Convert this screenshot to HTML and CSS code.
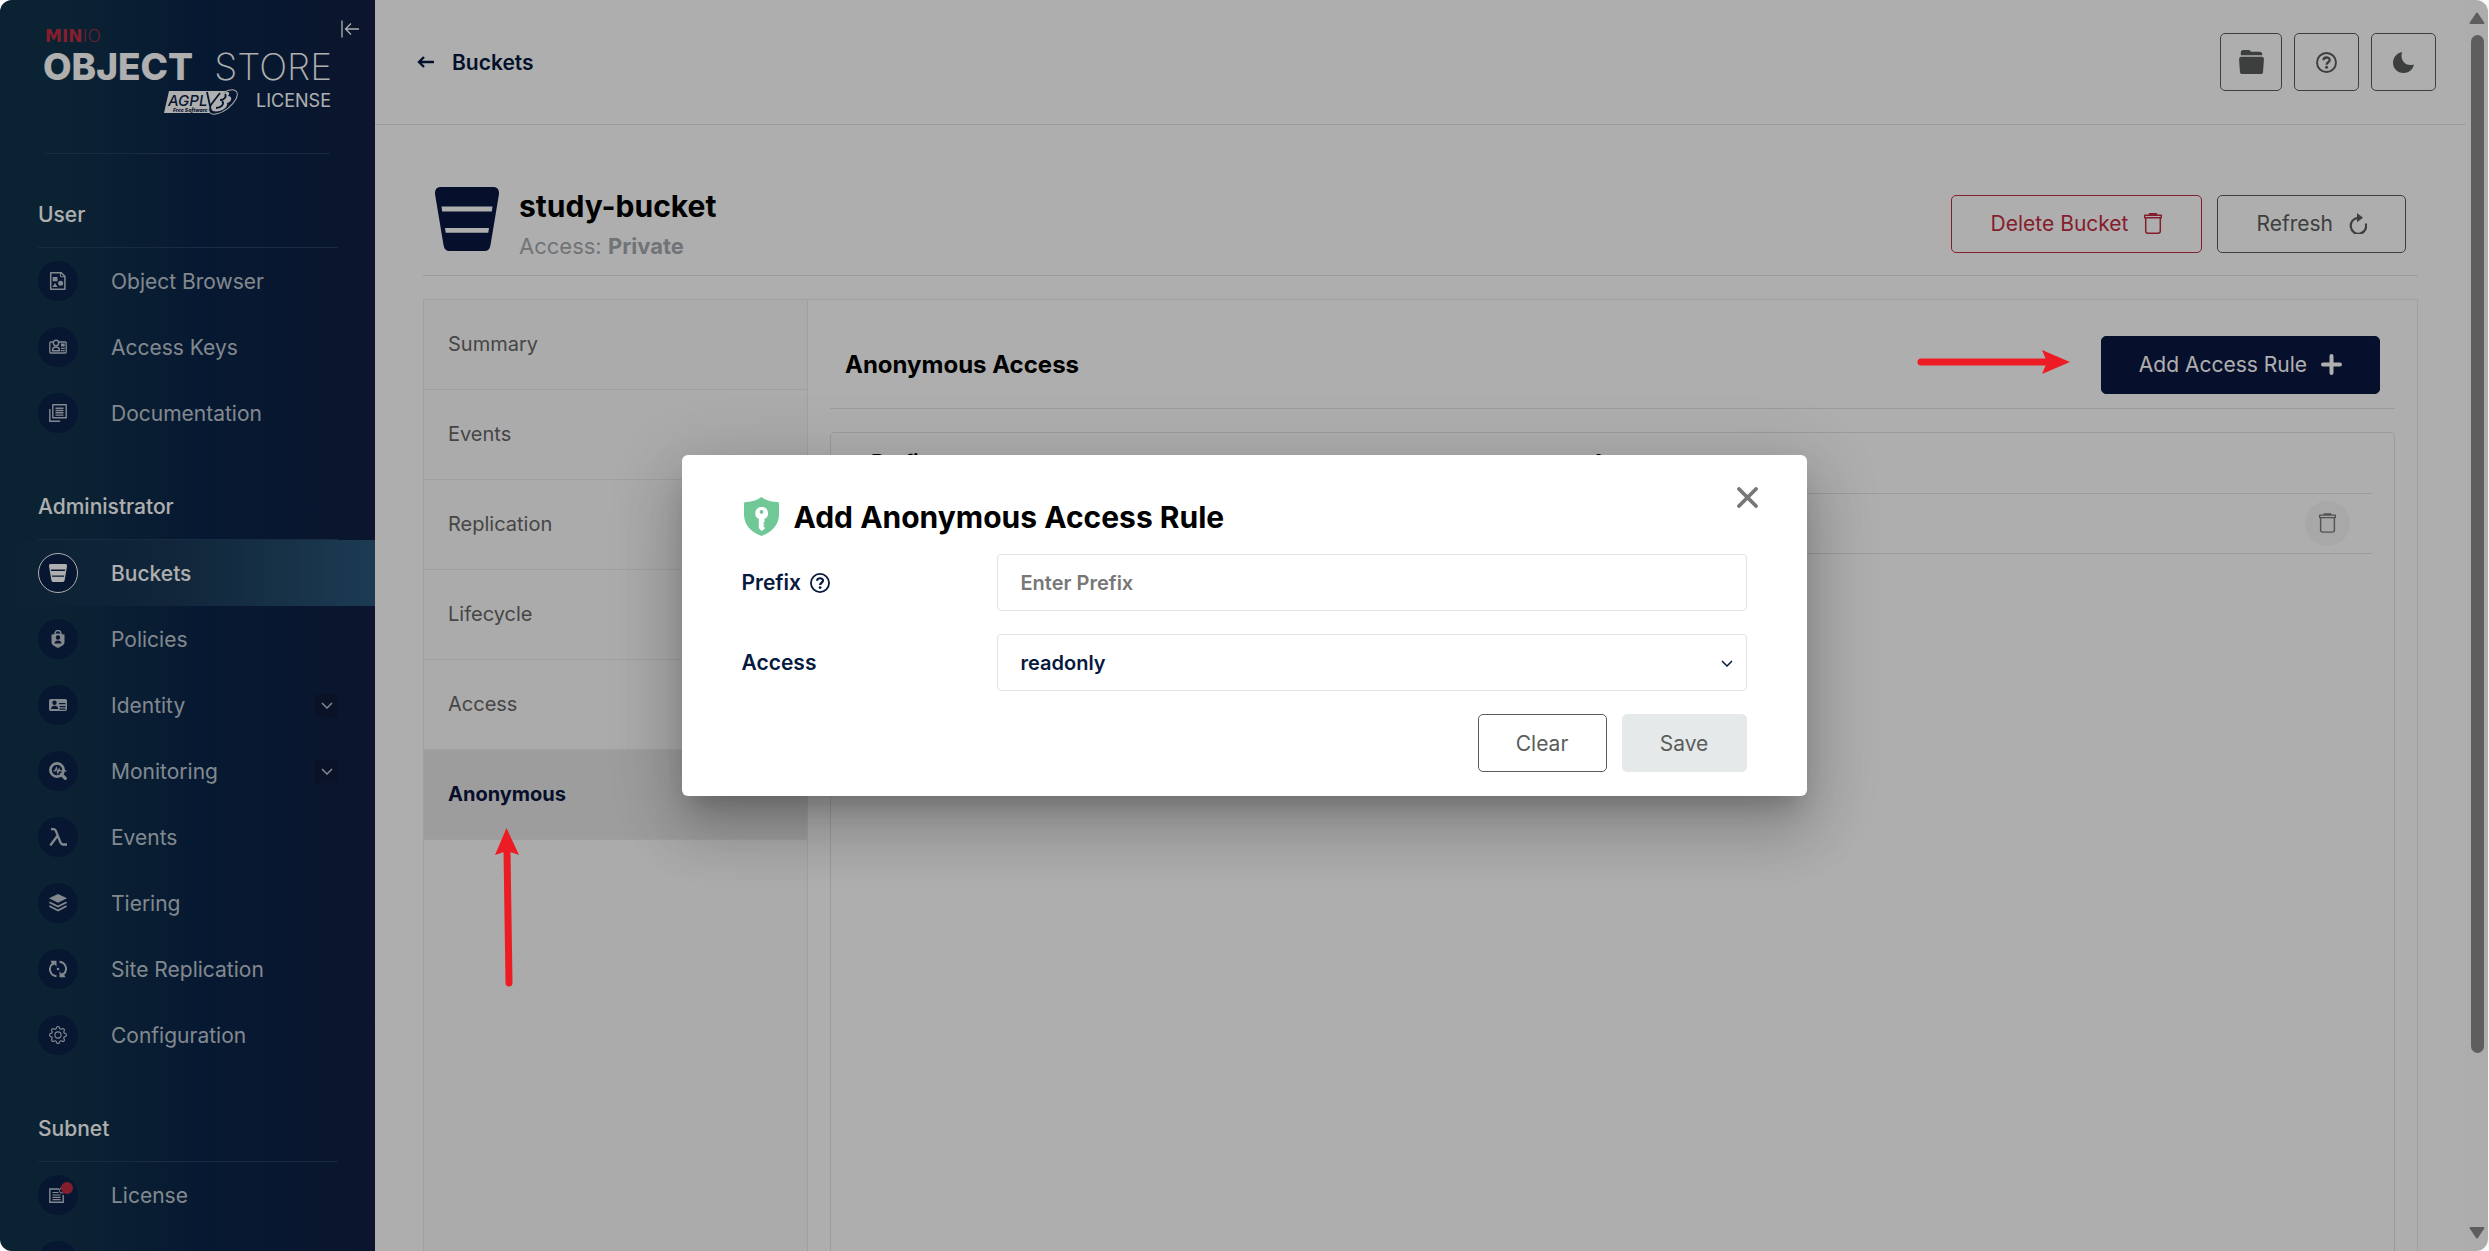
FILE: index.html
```html
<!DOCTYPE html>
<html lang="en">
<head>
<meta charset="utf-8">
<title>MinIO Console</title>
<link rel="stylesheet" href="styles.css">
</head>
<body>
<svg class="sprite" aria-hidden="true">
  <symbol id="i-browser" viewBox="0 0 18 18"><path d="M1.700.8h10.600l3.600 3.600v12.800H1.700z" fill="none" stroke="currentColor" stroke-width="1.500" stroke-linejoin="round"/><path d="M11.500 1v3.700h3.800" fill="none" stroke="currentColor"/><path d="M3.700 5h4.800v4.200H3.700zM6 11l2.600 4H3.400z" fill="currentColor"/><circle cx="11.600" cy="11.300" r="2.500" fill="currentColor"/></symbol>
  <symbol id="i-keys" viewBox="0 0 18 18"><path d="M4 4H1.700q-.9 0-.9.900v9.200q0 .9.900.9h14.600q.9 0 .9-.9V4.900q0-.9-.9-.9H10" fill="none" stroke="currentColor" stroke-width="1.300"/><circle cx="7" cy="5" r="2.700" fill="none" stroke="currentColor" stroke-width="1.400"/><path d="M3.500 12.800c0-5 7-5 7 0z" fill="none" stroke="currentColor" stroke-width="1.400"/><path d="M12 5.500h3.700v3H12zM12 9.700h3.700v1.200H12zM12 12h3.700v1.200H12z" fill="currentColor"/></symbol>
  <symbol id="i-docs" viewBox="0 0 18 18"><path d="M3.800.8h13.400v13H3.800z" fill="none" stroke="currentColor" stroke-width="1.400" stroke-linejoin="round"/><path d="M.8 5v12.200h10.400M6.500 4.200h8M6.500 6.500h8M6.500 8.800h8M6.500 11.100h8" fill="none" stroke="currentColor" stroke-width="1.400"/></symbol>
  <symbol id="i-bucket" viewBox="0 0 64 64"><path fill="currentColor" fill-rule="evenodd" d="M6 0h52q6.500 0 6 7l-8.500 51q-.8 6-6 6h-35q-5.200 0-6-6L0 7Q-.5 0 6 0zM6.500 19.500l.7 5h49.600l.7-5zM10 41l.7 4.700h42.600L54 41z"/></symbol>
  <symbol id="i-policy" viewBox="0 0 18 18"><path d="M6 5V3.500a3 3 0 0 1 6 0V5" fill="none" stroke="currentColor" stroke-width="1.400"/><path fill="currentColor" fill-rule="evenodd" d="M2.500 4.500q3.500 0 4.500-1h4q1 1 4.500 1v7.700c0 3-4 4.300-6.500 5.800-2.500-1.500-6.500-2.800-6.500-5.800zM9 5.300a2.200 2.200 0 1 0 0 4.400 2.200 2.200 0 0 0 0-4.400zM5.500 13.500h7c0-4-7-4-7 0z"/></symbol>
  <symbol id="i-identity" viewBox="0 0 18 18"><path fill="currentColor" fill-rule="evenodd" d="M1.700 3h14.600q1.700 0 1.700 1.700v8.600q0 1.700-1.700 1.700H1.700Q0 15 0 13.300V4.700Q0 3 1.700 3zM5.500 4.500a2.200 2.200 0 1 0 0 4.400 2.200 2.200 0 0 0 0-4.400zM2 13h7.300c0-4.500-7.300-4.500-7.300 0zM10 7v1.200h6.500V7zM10.500 10v1.200h6V10zM10.500 12.500v1.200h6v-1.200z"/></symbol>
  <symbol id="i-monitor" viewBox="0 0 18 18"><circle cx="8" cy="8" r="6.600" fill="none" stroke="currentColor" stroke-width="2.700"/><path d="m12.500 12.500 3.800 3.800" stroke="currentColor" stroke-width="3.200" stroke-linecap="round"/><path d="M4.500 8.800h1.700l1.200-3 1.400 5.200 1.300-4 .8 1.800h6.600" fill="none" stroke="currentColor" stroke-width="1.200"/></symbol>
  <symbol id="i-lambda" viewBox="0 0 18 18"><path d="M2 1.200h2.300q2 0 2.800 2.200l4.200 10.700q1 2.400 3 2.400H18M8.700 7.500 1.300 17.500" fill="none" stroke="currentColor" stroke-width="2.300"/></symbol>
  <symbol id="i-tier" viewBox="0 0 18 18"><path d="m9 0 9 4.300-9 4.500L0 4.300z" fill="currentColor"/><path d="m.4 8.200 8.600 4.300 8.600-4.300M.4 12l8.600 4.600L17.600 12" fill="none" stroke="currentColor" stroke-width="1.800"/></symbol>
  <symbol id="i-site" viewBox="0 0 18 18"><path d="M7.500 16.300C1 15.500-1.200 8 3.500 3.800M10.500 1.700C17 2.500 19.200 10 14.500 14.200" fill="none" stroke="currentColor" stroke-width="1.900"/><path d="M1.500.700h6v6L5.500 4.200 4 5.400zM16.500 17.300h-6v-6l2 2.500 1.500-1.200z" fill="currentColor"/><circle cx="9" cy="9" r="1.300" fill="currentColor"/></symbol>
  <symbol id="i-gear" viewBox="0 0 16 16"><path fill="currentColor" d="M8 4.754a3.246 3.246 0 1 0 0 6.492 3.246 3.246 0 0 0 0-6.492M5.754 8a2.246 2.246 0 1 1 4.492 0 2.246 2.246 0 0 1-4.492 0"/><path fill="currentColor" d="M9.796 1.343c-.527-1.790-3.065-1.790-3.592 0l-.094.319a.873.873 0 0 1-1.255.520l-.292-.160c-1.640-.892-3.433.902-2.540 2.541l.159.292a.873.873 0 0 1-.520 1.255l-.319.094c-1.790.527-1.790 3.065 0 3.592l.319.094a.873.873 0 0 1 .520 1.255l-.160.292c-.892 1.640.901 3.434 2.541 2.540l.292-.159a.873.873 0 0 1 1.255.520l.094.319c.527 1.790 3.065 1.790 3.592 0l.094-.319a.873.873 0 0 1 1.255-.520l.292.160c1.640.893 3.434-.902 2.540-2.541l-.159-.292a.873.873 0 0 1 .520-1.255l.319-.094c1.790-.527 1.790-3.065 0-3.592l-.319-.094a.873.873 0 0 1-.520-1.255l.160-.292c.893-1.640-.902-3.433-2.541-2.540l-.292.159a.873.873 0 0 1-1.255-.520zm-2.633.283c.246-.835 1.428-.835 1.674 0l.094.319a1.873 1.873 0 0 0 2.693 1.115l.291-.160c.764-.415 1.600.420 1.184 1.185l-.159.292a1.873 1.873 0 0 0 1.116 2.692l.318.094c.835.246.835 1.428 0 1.674l-.319.094a1.873 1.873 0 0 0-1.115 2.693l.160.291c.415.764-.420 1.600-1.185 1.184l-.291-.159a1.873 1.873 0 0 0-2.693 1.116l-.094.318c-.246.835-1.428.835-1.674 0l-.094-.319a1.873 1.873 0 0 0-2.692-1.115l-.292.160c-.764.415-1.600-.420-1.184-1.185l.159-.291A1.873 1.873 0 0 0 1.945 8.930l-.319-.094c-.835-.246-.835-1.428 0-1.674l.319-.094A1.873 1.873 0 0 0 3.060 4.377l-.160-.292c-.415-.764.420-1.600 1.185-1.184l.292.159a1.873 1.873 0 0 0 2.692-1.115z"/></symbol>
  <symbol id="i-license" viewBox="0 0 18 18"><path d="M10 3H.8v13.200h13.400V9" fill="none" stroke="currentColor" stroke-width="1.400"/><path d="M3.500 6.500h6M3.500 9h8M3.500 11.300h8M3.500 13.600h8" stroke="currentColor" stroke-width="1.200"/><circle cx="13" cy="4.500" r="2.600" fill="none" stroke="currentColor"/></symbol>
  <symbol id="i-chevron" viewBox="0 0 12 7"><path d="m1 1 5 5 5-5" fill="none" stroke="currentColor" stroke-width="1.500"/></symbol>
  <symbol id="i-trash" viewBox="0 0 18 21"><path d="M1.700 4.500v13.500q0 2.200 2.200 2.200h10.200q2.200 0 2.200-2.200V4.500" fill="none" stroke="currentColor" stroke-width="1.500"/><path d="M.700 2.200h16.600v2.600H.700zM5.500 2V.8h7V2" fill="none" stroke="currentColor" stroke-width="1.400" stroke-linejoin="round"/></symbol>
  <symbol id="i-help" viewBox="0 0 21 21"><circle cx="10.500" cy="10.500" r="9.500" fill="none" stroke="currentColor" stroke-width="1.900"/><path d="M7.500 8.200c0-3.600 6.200-3.500 6.200-.2 0 2.300-3.100 2.200-3.100 4.700" fill="none" stroke="currentColor" stroke-width="2.300"/><circle cx="10.600" cy="15.300" r="1.500" fill="currentColor"/></symbol>
  <symbol id="i-cross" viewBox="0 0 21 21"><path d="m2 2 17 17M19 2 2 19" stroke="currentColor" stroke-width="3.800" stroke-linecap="round"/></symbol>
</svg>

<div class="app">
  <nav class="sidebar">
    <button class="collapse" aria-label="Collapse menu"><svg viewBox="0 0 18 18"><path d="M1 .5v17M18 9H4.500M10 3.500 4.500 9l5.500 5.500" fill="none" stroke="currentColor" stroke-width="1.300"/></svg></button>
    <div class="brand">
      <svg viewBox="0 0 285 86" role="img" aria-label="MinIO Object Store, AGPL v3 license">
        <text class="lg-minio" x="0" y="12"><tspan class="lg-heavy">MIN</tspan><tspan class="lg-thin">IO</tspan></text>
        <text class="lg-bold" x="-2" y="50">OBJECT</text>
        <text class="lg-light" x="287" y="50" text-anchor="end">STORE</text>
        <path d="M124 61h62l-16 22h-51z" fill="#fff"/>
        <text class="lg-agpl" x="123" y="76">AGPL</text>
        <text class="lg-free" x="128" y="82">Free Software</text>
        <ellipse cx="178" cy="72" rx="17" ry="8" transform="rotate(-38 178 72)" fill="#0a2448" stroke="#fff"/>
        <path d="M168 81c-5-4 1-14 10-18 5-2 8-1 5 3 5 0 4 6-1 7 2 5-8 10-14 8z" fill="#fff"/>
        <path d="m162 62 3 14 10-13M171 78c5 0 9-4 6-7M175 70c4 0 7-3 5-6" fill="none" stroke="#0a2448" stroke-width="1.800"/>
        <text class="lg-license" x="286" y="77" text-anchor="end">LICENSE</text>
      </svg>
    </div>
    <h2 class="group first">User</h2>
    <a class="item" href="#"><span class="dot"><svg><use href="#i-browser"/></svg></span>Object Browser</a>
    <a class="item" href="#"><span class="dot"><svg><use href="#i-keys"/></svg></span>Access Keys</a>
    <a class="item" href="#"><span class="dot"><svg><use href="#i-docs"/></svg></span>Documentation</a>
    <h2 class="group">Administrator</h2>
    <a class="item active" href="#"><span class="dot"><svg><use href="#i-bucket"/></svg></span>Buckets</a>
    <a class="item" href="#"><span class="dot"><svg><use href="#i-policy"/></svg></span>Policies</a>
    <a class="item" href="#"><span class="dot"><svg><use href="#i-identity"/></svg></span>Identity<span class="more"><svg><use href="#i-chevron"/></svg></span></a>
    <a class="item" href="#"><span class="dot"><svg><use href="#i-monitor"/></svg></span>Monitoring<span class="more"><svg><use href="#i-chevron"/></svg></span></a>
    <a class="item" href="#"><span class="dot"><svg><use href="#i-lambda"/></svg></span>Events</a>
    <a class="item" href="#"><span class="dot"><svg><use href="#i-tier"/></svg></span>Tiering</a>
    <a class="item" href="#"><span class="dot"><svg><use href="#i-site"/></svg></span>Site Replication</a>
    <a class="item" href="#"><span class="dot"><svg><use href="#i-gear"/></svg></span>Configuration</a>
    <h2 class="group">Subnet</h2>
    <a class="item" href="#"><span class="dot"><svg><use href="#i-license"/></svg><span class="badge"></span></span>License</a>
    <a class="item" href="#" aria-label="Health"><span class="dot"></span></a>
  </nav>

  <main class="main">
    <header class="topbar">
      <a class="back" href="#"><svg viewBox="0 0 17 12"><path d="M17 6H2M7 1 2 6l5 5" fill="none" stroke="currentColor" stroke-width="2.400"/></svg>Buckets</a>
      <div class="tools">
        <button class="btn tool folder" aria-label="Object transfers"><svg viewBox="0 0 29 28"><path fill="currentColor" d="M2 6V3q0-3 3-3h6q2 0 3 2h10q3 0 3 3v1zM2 8h25q2 0 2 3l-1 14q0 3-3 3H4q-3 0-3-3L0 11q0-3 2-3z"/></svg></button>
        <button class="btn tool" aria-label="Help"><svg><use href="#i-help"/></svg></button>
        <button class="btn tool" aria-label="Dark mode"><svg viewBox="0 0 21 21"><path fill="currentColor" d="M9 0C4 1 0 5.500 0 11c0 5.500 4.500 10 10.500 10 5 0 9.500-3.500 10.500-8.500C14 15 6.500 9.500 9 0z"/></svg></button>
      </div>
    </header>

    <section class="content">
      <div class="bucket-head">
        <svg class="bucket-icon"><use href="#i-bucket"/></svg>
        <div class="bucket-name">
          <h1>study-bucket</h1>
          <p>Access: <b>Private</b></p>
        </div>
        <button class="btn danger">Delete Bucket<svg><use href="#i-trash"/></svg></button>
        <button class="btn">Refresh<svg viewBox="0 0 18 21"><path d="M16.800 10.500A7.700 8 0 1 1 9 4.800" fill="none" stroke="currentColor" stroke-width="2.200"/><path d="M8 0l6 4.700L8 9.300z" fill="currentColor"/></svg></button>
      </div>

      <div class="panel">
        <div class="tabs">
          <button class="tab">Summary</button>
          <button class="tab">Events</button>
          <button class="tab">Replication</button>
          <button class="tab">Lifecycle</button>
          <button class="tab">Access</button>
          <button class="tab selected">Anonymous</button>
        </div>
        <div class="pane">
          <div class="pane-head">
            <h2>Anonymous Access</h2>
            <button class="btn primary">Add Access Rule<svg viewBox="0 0 21 21"><path d="M10.500 2v17M2 10.500h17" stroke="currentColor" stroke-width="4" stroke-linecap="round"/></svg></button>
          </div>
          <div class="table-box">
            <table>
              <thead><tr><th class="c-prefix">Prefix</th><th>Access</th><th class="c-act"></th></tr></thead>
              <tbody><tr><td></td><td></td><td class="c-act"><button class="round" aria-label="Delete rule"><svg><use href="#i-trash"/></svg></button></td></tr></tbody>
            </table>
          </div>
        </div>
      </div>
    </section>
  </main>

  <div class="scrollbar" aria-hidden="true">
    <svg viewBox="0 0 16 12"><path d="M8 1.500 14.500 11h-13z" fill="currentColor" stroke="currentColor" stroke-width="2" stroke-linejoin="round"/></svg>
    <div class="thumb"></div>
    <svg viewBox="0 0 16 12"><path d="M8 10.500 14.500 1h-13z" fill="currentColor" stroke="currentColor" stroke-width="2" stroke-linejoin="round"/></svg>
  </div>

  <div class="overlay">
    <form class="dialog" role="dialog" aria-labelledby="dlg-title">
      <button type="button" class="close" aria-label="Close"><svg><use href="#i-cross"/></svg></button>
      <h2 id="dlg-title"><svg viewBox="0 0 35 39"><path fill="#70c896" d="M17.500 0C13 3.500 7 5 1.500 5Q0 5 0 6.500V17c0 11 7 18 17.500 22C28 35 35 28 35 17V6.500Q35 5 33.500 5C28 5 22 3.500 17.500 0z"/><path fill="#fff" fill-rule="evenodd" d="M17.500 10a6.200 6.200 0 0 0-2.700 11.800V31l2.700 3 3-2v-2l-1.500-1.200 1.500-1.300-1.500-1.300 1.500-1.300v-3.100A6.200 6.200 0 0 0 17.500 10zm0 3a1.900 1.900 0 1 1 0 3.800 1.900 1.900 0 0 1 0-3.800z"/></svg>Add Anonymous Access Rule</h2>
      <div class="field">
        <label for="prefix">Prefix<svg><use href="#i-help"/></svg></label>
        <input id="prefix" type="text" placeholder="Enter Prefix">
      </div>
      <div class="field">
        <label for="access">Access</label>
        <div class="select">
          <select id="access"><option>readonly</option><option>writeonly</option><option>readwrite</option></select>
          <svg><use href="#i-chevron"/></svg>
        </div>
      </div>
      <div class="actions">
        <button type="reset" class="btn clear">Clear</button>
        <button type="submit" class="btn save" disabled>Save</button>
      </div>
    </form>
  </div>

  <svg class="arrow arrow-right" viewBox="0 0 153 24" aria-hidden="true"><path d="M4 12h126" stroke="#ed1c24" stroke-width="7" stroke-linecap="round"/><path d="m153 12-28-12 5 12-5 12z" fill="#ed1c24"/></svg>
  <svg class="arrow arrow-up" viewBox="0 0 24 159" aria-hidden="true"><path d="M14 155 12 23" stroke="#ed1c24" stroke-width="7" stroke-linecap="round"/><path d="M11.500 0 0 27l12-4 12 4z" fill="#ed1c24"/></svg>
</div>
</body>
</html>
```

FILE: styles.css
```css
* { box-sizing: border-box; }

body {
  margin: 0;
  background: #fbfbfb;
  font-family: Inter, "Liberation Sans", sans-serif;
  font-size: 21px;
}

h1, h2, p { margin: 0; }
button, input, select { font: inherit; color: inherit; margin: 0; }
button { background: none; border: 0; padding: 0; cursor: pointer; }
a { color: inherit; text-decoration: none; }
svg { display: block; flex: none; }
.sprite { position: absolute; width: 0; height: 0; }

.app {
  position: relative;
  display: flex;
  height: 100vh;
  margin-right: 1px;
  overflow: hidden;
  border-radius: 12px;
  background: #fefefe;
}

/* Sidebar */
.sidebar {
  position: relative;
  flex: none;
  width: 375px;
  overflow: hidden;
  color: #fff;
  background: linear-gradient(90deg, #11324b 0%, #11324b 18%, #0a2549 52%, #101f42 100%);
}
.collapse { position: absolute; top: 20px; right: 16px; }
.collapse svg { width: 18px; height: 18px; }
.brand {
  height: 154px;
  margin: 0 45px;
  padding-top: 30px;
  border-bottom: 1px solid #243f5f;
}
.brand svg { width: 285px; height: 86px; overflow: visible; }
.brand text { fill: #fff; }
.brand .lg-minio { fill: #c22d41; font-family: "DejaVu Sans", sans-serif; font-size: 17px; }
.lg-heavy { font-weight: 700; }
.lg-thin { font-weight: 200; }
.brand .lg-bold, .brand .lg-light { font-size: 37px; }
.brand .lg-bold { font-weight: 800; }
.brand .lg-light { font-weight: 200; }
.brand .lg-agpl { fill: #0a2448; font-size: 15px; font-style: italic; font-weight: 500; }
.brand .lg-free { fill: #0a2448; font-size: 5px; font-style: italic; font-weight: 800; }
.brand .lg-license { font-size: 18px; font-weight: 400; }

.group {
  height: 94px;
  margin: 0 37px 0 38px;
  padding-top: 46px;
  border-bottom: 1px solid #243f5f;
  font-size: 21px;
  font-weight: 500;
  line-height: 30px;
}
.item {
  display: flex;
  align-items: center;
  gap: 33px;
  height: 66px;
  padding: 0 37px 0 38px;
  color: #bfc7d0;
}
.dot {
  position: relative;
  display: grid;
  place-items: center;
  flex: none;
  width: 40px;
  height: 40px;
  border-radius: 50%;
  background: #0b2148;
}
.dot svg { width: 18px; height: 18px; }
.badge {
  position: absolute;
  top: 7px;
  right: 5px;
  width: 12px;
  height: 12px;
  border-radius: 50%;
  background: #c22d41;
}
.active {
  color: #fff;
  font-weight: 500;
  background: linear-gradient(90deg, transparent 0%, #1a3956 50%, #29577a 100%);
}
.active .dot { border: 1px solid #fff; }
.more {
  display: grid;
  place-items: center;
  width: 23px;
  height: 23px;
  margin-left: auto;
  border-radius: 3px;
  background: #0e1b3a;
}
.more svg { width: 12px; height: 7px; }

/* Main column */
.main { flex: 1; min-width: 0; display: flex; flex-direction: column; }
.topbar {
  display: flex;
  align-items: center;
  justify-content: space-between;
  flex: none;
  height: 125px;
  padding: 0 30px 0 42px;
  border-bottom: 1px solid #e2e2e2;
}
.back {
  display: flex;
  align-items: center;
  gap: 18px;
  color: #07193e;
  font-weight: 600;
}
.back svg { width: 17px; height: 12px; }
.tools { display: flex; gap: 12px; }

.btn {
  display: flex;
  align-items: center;
  justify-content: center;
  gap: 16px;
  height: 58px;
  padding: 0 38px;
  border: 1px solid #5a5d5c;
  border-radius: 5px;
  color: #5a5d5c;
}
.btn svg { width: 18px; height: 21px; }
.tool { width: 65px; padding: 0; }
.tool svg { width: 21px; height: 21px; }
.folder { width: 62px; }
.folder svg { width: 29px; height: 24px; }
.danger { padding: 0 39px; border-color: #c22d41; color: #c22d41; }
.primary { gap: 14px; padding: 0 37px; border-color: #0a1640; background: #0a1640; color: #fff; }
.primary svg { width: 21px; height: 21px; }

.content {
  flex: 1;
  display: flex;
  flex-direction: column;
  min-height: 0;
  padding: 47px 48px 0;
}
.bucket-head {
  display: flex;
  align-items: center;
  gap: 15px;
  flex: none;
  height: 104px;
  padding: 0 12px;
  border-bottom: 1px solid #e2e2e2;
}
.bucket-icon { align-self: flex-start; width: 64px; height: 64px; margin-top: 15px; color: #0a1640; }
.bucket-name { flex: 1; padding: 0 5px; }
.bucket-name h1 { font-size: 30px; font-weight: 700; line-height: 44px; }
.bucket-name p { color: #a5aaae; font-size: 22px; line-height: 36px; }

.panel {
  flex: 1;
  display: flex;
  min-height: 0;
  margin-top: 23px;
  border: 1px solid #eaeaea;
  border-bottom: 0;
}
.tabs {
  flex: none;
  width: 384px;
  border-right: 1px solid #eaeaea;
  background: #f9f9f9;
}
.tab {
  display: block;
  width: 100%;
  height: 90px;
  padding: 0 24px 2px;
  border-bottom: 1px solid #eaeaea;
  color: #666;
  font-size: 20px;
  text-align: left;
}
.selected { background: #e5e5e5; color: #0a1640; font-weight: 700; }

.pane { flex: 1; display: flex; flex-direction: column; padding: 21px 22px 0; }
.pane-head {
  display: flex;
  align-items: center;
  justify-content: space-between;
  flex: none;
  height: 88px;
  padding: 0 15px;
  border-bottom: 1px solid #e2e2e2;
}
.pane-head h2 { font-size: 24px; font-weight: 700; }
.table-box {
  flex: 1;
  margin-top: 23px;
  padding: 0 22px;
  border: 1px solid #e2e2e2;
  border-bottom: 0;
  border-radius: 5px 5px 0 0;
}
table { width: 100%; border-collapse: collapse; table-layout: fixed; }
th, td {
  height: 60px;
  padding: 0 18px;
  border-bottom: 1px solid #e2e2e2;
  font-size: 21px;
  font-weight: 600;
  text-align: left;
}
.c-prefix { width: 720px; }
.c-act { width: 120px; padding-right: 22px; }
.round {
  display: grid;
  place-items: center;
  width: 45px;
  height: 45px;
  margin-left: auto;
  border-radius: 50%;
  background: #f5f5f5;
  color: #7a7a7a;
}
.round svg { width: 17px; height: 20px; }

.scrollbar {
  flex: none;
  display: flex;
  flex-direction: column;
  align-items: center;
  width: 22px;
  padding: 12px 3px;
  background: #fcfcfc;
  color: #8a8a8a;
}
.scrollbar svg { width: 16px; height: 12px; }
.thumb { width: 13px; height: 83%; margin: 11px 0 auto; border-radius: 7px; background: #8a8a8a; }

/* Dialog */
.overlay {
  position: absolute;
  inset: 0;
  display: grid;
  place-items: center;
  background: rgba(0, 0, 0, .314);
}
.dialog {
  position: relative;
  width: 1125px;
  padding: 42px 60px 24px;
  border-radius: 6px;
  background: #fff;
  box-shadow: 0 17px 23px -10px rgba(0, 0, 0, .2), 0 36px 57px 4px rgba(0, 0, 0, .14), 0 14px 69px 12px rgba(0, 0, 0, .12);
}
.dialog h2 {
  display: flex;
  align-items: center;
  gap: 15px;
  height: 39px;
  padding-left: 2px;
  margin-bottom: 18px;
  font-size: 30px;
  font-weight: 700;
}
.dialog h2 svg { width: 35px; height: 39px; }
.close { position: absolute; top: 32px; right: 49px; color: #777; }
.close svg { width: 21px; height: 21px; }
.field {
  display: flex;
  align-items: center;
  margin-bottom: 23px;
  color: #07193e;
  font-weight: 600;
}
.field label { display: flex; align-items: center; gap: 9px; flex: none; width: 255px; }
.field label svg { width: 20px; height: 20px; }
.field input, .select { flex: 1; height: 57px; }
.field input, .field select {
  padding: 0 23px;
  border: 1px solid #e2e2e2;
  border-radius: 4px;
  background: #fff;
  font-size: 20px;
}
.field input::placeholder { color: #777; opacity: 1; }
.select { position: relative; }
.select select { width: 100%; height: 57px; appearance: none; }
.select svg { position: absolute; right: 14px; top: 26px; width: 12px; height: 7px; }
.actions { display: flex; justify-content: flex-end; gap: 15px; }
.clear { width: 129px; }
.save { width: 125px; border-color: #e5e9ea; background: #e5e9ea; }

/* Callout arrows */
.arrow { position: absolute; }
.arrow-right { left: 1917px; top: 350px; width: 153px; height: 24px; }
.arrow-up { left: 495px; top: 828px; width: 24px; height: 159px; }
```
